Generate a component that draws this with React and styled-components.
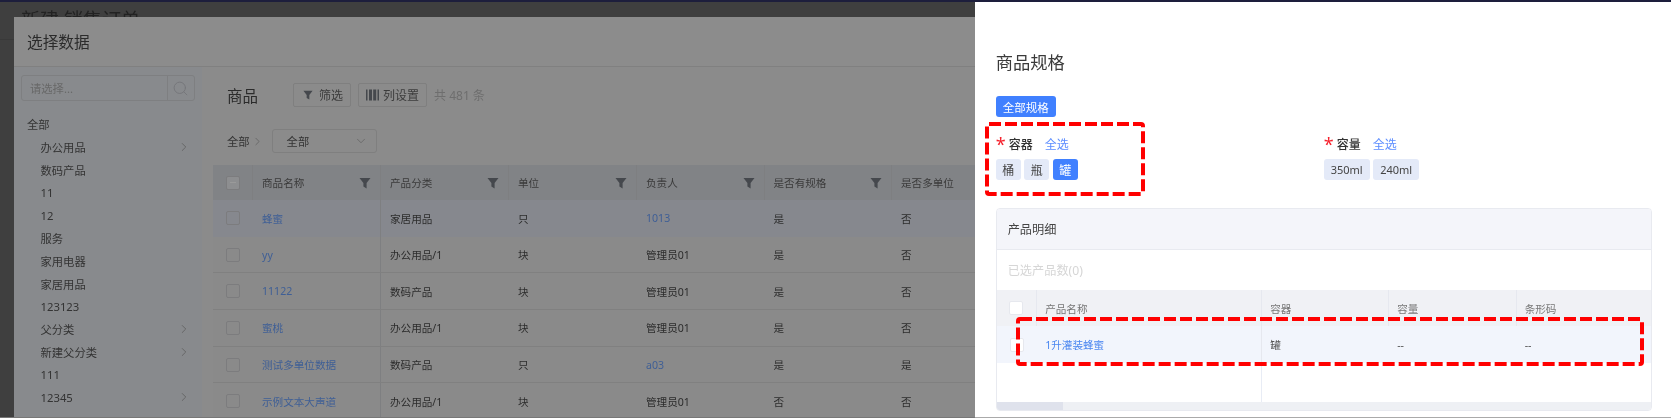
import React from "react";
import styled, { createGlobalStyle } from "styled-components";
import { ChevronRight, ChevronDown, Search } from "lucide-react";

const GlobalStyle = createGlobalStyle`
  html, body {
    margin: 0;
    padding: 0;
    background: #fff;
    font-family: "Noto Sans", "Noto Sans CJK SC", sans-serif;
  }
  * {
    box-sizing: border-box;
  }
`;

const Screen = styled.div`
  position: relative;
  width: 1671px;
  height: 418px;
  overflow: hidden;
  display: flex;
  flex-direction: column;
  filter: blur(0.45px);
`;

const TopLine = styled.div`
  height: 2px;
  flex-shrink: 0;
  background: #1d1e3c;
`;

const Content = styled.div`
  flex: 1;
  display: flex;
  min-height: 0;
`;

const Backdrop = styled.div`
  position: relative;
  width: 975px;
  flex-shrink: 0;
  background: #3f3f3f;
  border-bottom: 1px solid #777;
`;

const PageHeader = styled.div`
  height: 38px;
  padding: 5px 0 0 21px;
  border-bottom: 1px solid #393939;
  font-size: 19px;
  line-height: 26px;
  color: #222;
`;

const Modal = styled.div`
  position: absolute;
  left: 13.5px;
  top: 15px;
  right: 0;
  bottom: 0;
  background: #8b8b8b;
  display: flex;
  flex-direction: column;
  overflow: hidden;
`;

const ModalHeader = styled.div`
  height: 50px;
  flex-shrink: 0;
  padding-left: 13.5px;
  display: flex;
  align-items: center;
  border-bottom: 1px solid #808080;
  background: #8c8c8c;
  font-size: 15.7px;
  color: #2b2b2b;
`;

const ModalBody = styled.div`
  flex: 1;
  display: flex;
  min-height: 0;
`;

const Sidebar = styled.div`
  width: 188.5px;
  flex-shrink: 0;
  background: #888a8d;
  padding-top: 8px;
  overflow: hidden;
`;

const SearchBox = styled.div`
  height: 26px;
  margin: 0 7.5px;
  display: flex;
  align-items: center;
  border: 1px solid #7e7f81;
  border-radius: 3px;
  font-size: 11.3px;
  color: #686868;
`;

const SearchText = styled.div`
  flex: 1;
  padding-left: 8px;
`;

const SearchIcon = styled.div`
  width: 27px;
  height: 100%;
  display: flex;
  align-items: center;
  justify-content: center;
  border-left: 1px solid #7e7f81;
  color: #75767a;
`;

const CategoryList = styled.div`
  margin-top: 10.6px;
`;

const Category = styled.div`
  height: ${(p) => (p.$root ? "24.5px" : "22.7px")};
  padding: 0 11px 0 ${(p) => (p.$root ? "13.5px" : "27px")};
  display: flex;
  align-items: center;
  justify-content: space-between;
  font-size: 11.3px;
  color: #333;
  svg {
    color: #5f5f5f;
  }
`;

const Main = styled.div`
  flex: 1;
  min-width: 0;
  padding: 16px 0 0 11px;
  overflow: hidden;
`;

const TitleRow = styled.div`
  height: 24px;
  margin-left: 14px;
  display: flex;
  align-items: center;
`;

const MainTitle = styled.div`
  width: 66px;
  font-size: 15.5px;
  color: #2b2b2b;
`;

const ToolButton = styled.div`
  height: 24px;
  margin-right: 7px;
  padding: 0 7px 0 ${(p) => (p.$bars ? "7px" : "9px")};
  display: flex;
  align-items: center;
  gap: ${(p) => (p.$bars ? "4px" : "6px")};
  border: 1px solid #7f7f7f;
  border-radius: 2px;
  font-size: 12px;
  color: #3c3c3c;
`;

const Count = styled.div`
  font-size: 12px;
  color: #6e6e6e;
`;

const FilterRow = styled.div`
  height: 24px;
  margin: 22px 0 0 14px;
  display: flex;
  align-items: center;
  font-size: 11.3px;
  color: #333;
  svg {
    color: #5f5f5f;
  }
`;

const Crumb = styled.div`
  display: flex;
  align-items: center;
  gap: 1px;
  margin-right: 8px;
`;

const SelectBox = styled.div`
  width: 105px;
  height: 24px;
  padding: 0 8px 0 14px;
  display: flex;
  align-items: center;
  justify-content: space-between;
  border: 1px solid #7f7f7f;
  border-radius: 3px;
`;

const Table = styled.div`
  margin-top: 12px;
`;

const GoodsRow = styled.div`
  display: grid;
  grid-template-columns: 40px 128px 128px 128px 127.5px 127.5px 1fr;
  height: ${(p) => (p.$head ? "35px" : "36.7px")};
  background: ${(p) => (p.$head ? "#818386" : p.$active ? "#86888e" : "#8a8a8a")};
  border-bottom: ${(p) => (p.$head || p.$active ? "none" : "1px solid #808080")};
`;

const GoodsCell = styled.div`
  padding: 0 9px;
  display: flex;
  align-items: center;
  justify-content: space-between;
  font-size: 10.6px;
  color: ${(p) => (p.$link ? "#3f5f96" : p.$head ? "#3a3a3a" : "#2c2c2c")};
  border-right: ${(p) => (p.$line ? "1px solid #7e7f81" : "none")};
  white-space: nowrap;
`;

const CheckCell = styled.div`
  display: flex;
  align-items: center;
  justify-content: center;
  border-right: ${(p) => (p.$line ? "1px solid #7e7f81" : "none")};
`;

const DimCheck = styled.div`
  width: 14px;
  height: 14px;
  border: 1px solid #7c7c7e;
  border-radius: 2px;
  background: ${(p) => (p.$partial ? "#8d8e90" : "transparent")};
  display: flex;
  align-items: center;
  justify-content: center;
  &::after {
    content: "";
    display: ${(p) => (p.$partial ? "block" : "none")};
    width: 6px;
    height: 1px;
    background: #9a9a9a;
  }
`;

const Drawer = styled.div`
  flex: 1;
  min-width: 0;
  background: #fff;
  padding: 49px 19.3px 0 20.7px;
  border-bottom: 1px solid #aaa;
`;

const DrawerTitle = styled.div`
  font-size: 17.3px;
  line-height: 24px;
  color: #3a3a3a;
`;

const SpecTag = styled.span`
  height: 21px;
  padding: 0 ${(p) => (p.$wide || p.$text ? "7px" : "6.5px")};
  display: inline-flex;
  align-items: center;
  border-radius: 3px;
  font-size: ${(p) => (p.$wide ? "11.5px" : p.$text ? "11px" : "12px")};
  background: ${(p) => (p.$on ? "#4080ff" : "#e4eaf8")};
  color: ${(p) => (p.$on ? "#fff" : "#444")};
`;

const AllTagRow = styled.div`
  margin-top: 21px;
  display: flex;
`;

const SpecGrid = styled.div`
  margin-top: 18px;
  display: grid;
  grid-template-columns: 328px 1fr;
`;

const SpecLabel = styled.div`
  height: 18px;
  display: flex;
  align-items: center;
  font-size: 12px;
  color: #333;
`;

const Required = styled.span`
  width: 13px;
  font-size: 18px;
  line-height: 18px;
  color: #f5222d;
`;

const LabelName = styled.span`
  width: 36px;
  font-weight: 500;
`;

const SelectAll = styled.span`
  color: #5b8cff;
`;

const SpecTags = styled.div`
  margin-top: 6px;
  display: flex;
  gap: 3.5px;
`;

const Card = styled.div`
  margin-top: 28px;
  height: 203px;
  border: 1px solid #e8eaf0;
  border-radius: 4px;
  overflow: hidden;
  display: flex;
  flex-direction: column;
`;

const CardHeader = styled.div`
  height: 41px;
  padding-left: 11px;
  display: flex;
  align-items: center;
  background: #f4f5fa;
  border-bottom: 1px solid #e8eaf0;
  font-size: 12.2px;
  color: #444;
`;

const Selected = styled.div`
  height: 40px;
  padding-left: 11px;
  display: flex;
  align-items: center;
  font-size: 12.2px;
  color: #d6d6d6;
`;

const DetailRow = styled.div`
  display: grid;
  grid-template-columns: 40.5px 225px 127px 127.5px 1fr;
  height: ${(p) => (p.$head ? "36px" : "37px")};
  background: ${(p) => (p.$head ? "#f0f1f5" : "#f2f5fc")};
`;

const DetailCell = styled.div`
  padding-left: 8px;
  display: flex;
  align-items: center;
  font-size: 10.6px;
  color: ${(p) => (p.$link ? "#4a86f0" : p.$head ? "#777" : "#555")};
  border-right: ${(p) => (p.$line ? "1px solid #e6e8ef" : "none")};
`;

const DetailCheckCell = styled.div`
  display: flex;
  align-items: center;
  justify-content: center;
  border-right: ${(p) => (p.$line ? "1px solid #e6e8ef" : "none")};
`;

const WhiteCheck = styled.div`
  width: 14px;
  height: 14px;
  background: #fff;
  border: 1px solid #e6e8ee;
  border-radius: 2px;
`;

const EmptyArea = styled.div`
  flex: 1;
  display: grid;
  grid-template-columns: 265.5px 1fr;
`;

const EmptyColumn = styled.div`
  border-right: 1px solid #e8ecf5;
`;

const ScrollTrack = styled.div`
  height: 8px;
  flex-shrink: 0;
  background: #eef0f4;
`;

const ScrollThumb = styled.div`
  width: 66px;
  height: 100%;
  background: #dfe2ec;
`;

const Annotation = styled.svg`
  position: absolute;
  left: ${(p) => p.$left}px;
  top: ${(p) => p.$top}px;
`;

const Funnel = ({ size = 12 }) => (
  <svg width={size} height={size} viewBox="0 0 12 12">
    <path d="M0.5 1H11.5L7.6 6V11.5L4.4 9.6V6Z" fill="#45484d" />
  </svg>
);

const BarsIcon = () => (
  <svg width="13" height="12" viewBox="0 0 13 12">
    <rect x="0" y="0.5" width="1.5" height="11" fill="#45484d" />
    <rect x="3" y="0.5" width="3" height="11" fill="#45484d" />
    <rect x="7.2" y="0.5" width="3" height="11" fill="#45484d" />
    <rect x="11.5" y="0.5" width="1.5" height="11" fill="#45484d" />
  </svg>
);

const DashedBox = ({ left, top, width, height }) => (
  <Annotation $left={left} $top={top} width={width} height={height}>
    <rect
      x="2"
      y="2"
      width={width - 4}
      height={height - 4}
      rx="2"
      fill="none"
      stroke="#ff0000"
      strokeWidth="4"
      strokeDasharray="12 4"
    />
  </Annotation>
);

const categories = [
  { name: "办公用品", more: true },
  { name: "数码产品" },
  { name: "11" },
  { name: "12" },
  { name: "服务" },
  { name: "家用电器" },
  { name: "家居用品" },
  { name: "123123" },
  { name: "父分类", more: true },
  { name: "新建父分类", more: true },
  { name: "111" },
  { name: "12345", more: true },
];

const heads = ["商品名称", "产品分类", "单位", "负责人", "是否有规格"];

const goods = [
  ["蜂蜜", "家居用品", "只", "1013", "是", "否"],
  ["yy", "办公用品/1", "块", "管理员01", "是", "否"],
  ["11122", "数码产品", "块", "管理员01", "是", "否"],
  ["蜜桃", "办公用品/1", "块", "管理员01", "是", "否"],
  ["测试多单位数据", "数码产品", "只", "a03", "是", "是"],
  ["示例文本大声道", "办公用品/1", "块", "管理员01", "否", "否"],
];

const App = () => {
  return (
    <Screen>
      <GlobalStyle />
      <TopLine />
      <Content>
        <Backdrop>
          <PageHeader>新建 销售订单</PageHeader>
          <Modal>
            <ModalHeader>选择数据</ModalHeader>
            <ModalBody>
              <Sidebar>
                <SearchBox>
                  <SearchText>请选择...</SearchText>
                  <SearchIcon>
                    <Search size={17} strokeWidth={1.4} />
                  </SearchIcon>
                </SearchBox>
                <CategoryList>
                  <Category $root>全部</Category>
                  {categories.map((c) => (
                    <Category key={c.name}>
                      {c.name}
                      {c.more && <ChevronRight size={14} strokeWidth={1.4} />}
                    </Category>
                  ))}
                </CategoryList>
              </Sidebar>
              <Main>
                <TitleRow>
                  <MainTitle>商品</MainTitle>
                  <ToolButton>
                    <Funnel size={10} />
                    筛选
                  </ToolButton>
                  <ToolButton $bars>
                    <BarsIcon />
                    列设置
                  </ToolButton>
                  <Count>共 481 条</Count>
                </TitleRow>
                <FilterRow>
                  <Crumb>
                    全部
                    <ChevronRight size={13} strokeWidth={1.4} />
                  </Crumb>
                  <SelectBox>
                    全部
                    <ChevronDown size={14} strokeWidth={1.2} />
                  </SelectBox>
                </FilterRow>
                <Table>
                  <GoodsRow $head>
                    <CheckCell $line>
                      <DimCheck $partial />
                    </CheckCell>
                    {heads.map((h) => (
                      <GoodsCell key={h} $head $line>
                        {h}
                        <Funnel />
                      </GoodsCell>
                    ))}
                    <GoodsCell $head>是否多单位</GoodsCell>
                  </GoodsRow>
                  {goods.map((g, i) => (
                    <GoodsRow key={g[0]} $active={i === 0}>
                      <CheckCell>
                        <DimCheck />
                      </CheckCell>
                      <GoodsCell $link $line>
                        {g[0]}
                      </GoodsCell>
                      <GoodsCell>{g[1]}</GoodsCell>
                      <GoodsCell>{g[2]}</GoodsCell>
                      <GoodsCell $link={g[3] === "1013" || g[3] === "a03"}>{g[3]}</GoodsCell>
                      <GoodsCell>{g[4]}</GoodsCell>
                      <GoodsCell>{g[5]}</GoodsCell>
                    </GoodsRow>
                  ))}
                </Table>
              </Main>
            </ModalBody>
          </Modal>
        </Backdrop>
        <Drawer>
          <DrawerTitle>商品规格</DrawerTitle>
          <AllTagRow>
            <SpecTag $on $wide>全部规格</SpecTag>
          </AllTagRow>
          <SpecGrid>
            <div>
              <SpecLabel>
                <Required>*</Required>
                <LabelName>容器</LabelName>
                <SelectAll>全选</SelectAll>
              </SpecLabel>
              <SpecTags>
                <SpecTag>桶</SpecTag>
                <SpecTag>瓶</SpecTag>
                <SpecTag $on>罐</SpecTag>
              </SpecTags>
            </div>
            <div>
              <SpecLabel>
                <Required>*</Required>
                <LabelName>容量</LabelName>
                <SelectAll>全选</SelectAll>
              </SpecLabel>
              <SpecTags>
                <SpecTag $text>350ml</SpecTag>
                <SpecTag $text>240ml</SpecTag>
              </SpecTags>
            </div>
          </SpecGrid>
          <Card>
            <CardHeader>产品明细</CardHeader>
            <Selected>已选产品数(0)</Selected>
            <DetailRow $head>
              <DetailCheckCell $line>
                <WhiteCheck />
              </DetailCheckCell>
              <DetailCell $head $line>产品名称</DetailCell>
              <DetailCell $head $line>容器</DetailCell>
              <DetailCell $head $line>容量</DetailCell>
              <DetailCell $head>条形码</DetailCell>
            </DetailRow>
            <DetailRow>
              <DetailCheckCell>
                <WhiteCheck />
              </DetailCheckCell>
              <DetailCell $link $line>1升灌装蜂蜜</DetailCell>
              <DetailCell>罐</DetailCell>
              <DetailCell>--</DetailCell>
              <DetailCell>--</DetailCell>
            </DetailRow>
            <EmptyArea>
              <EmptyColumn />
            </EmptyArea>
            <ScrollTrack>
              <ScrollThumb />
            </ScrollTrack>
          </Card>
        </Drawer>
      </Content>
      <DashedBox left={985} top={122} width={160} height={74} />
      <DashedBox left={1016} top={317} width={628} height={49} />
    </Screen>
  );
};

export default App;
